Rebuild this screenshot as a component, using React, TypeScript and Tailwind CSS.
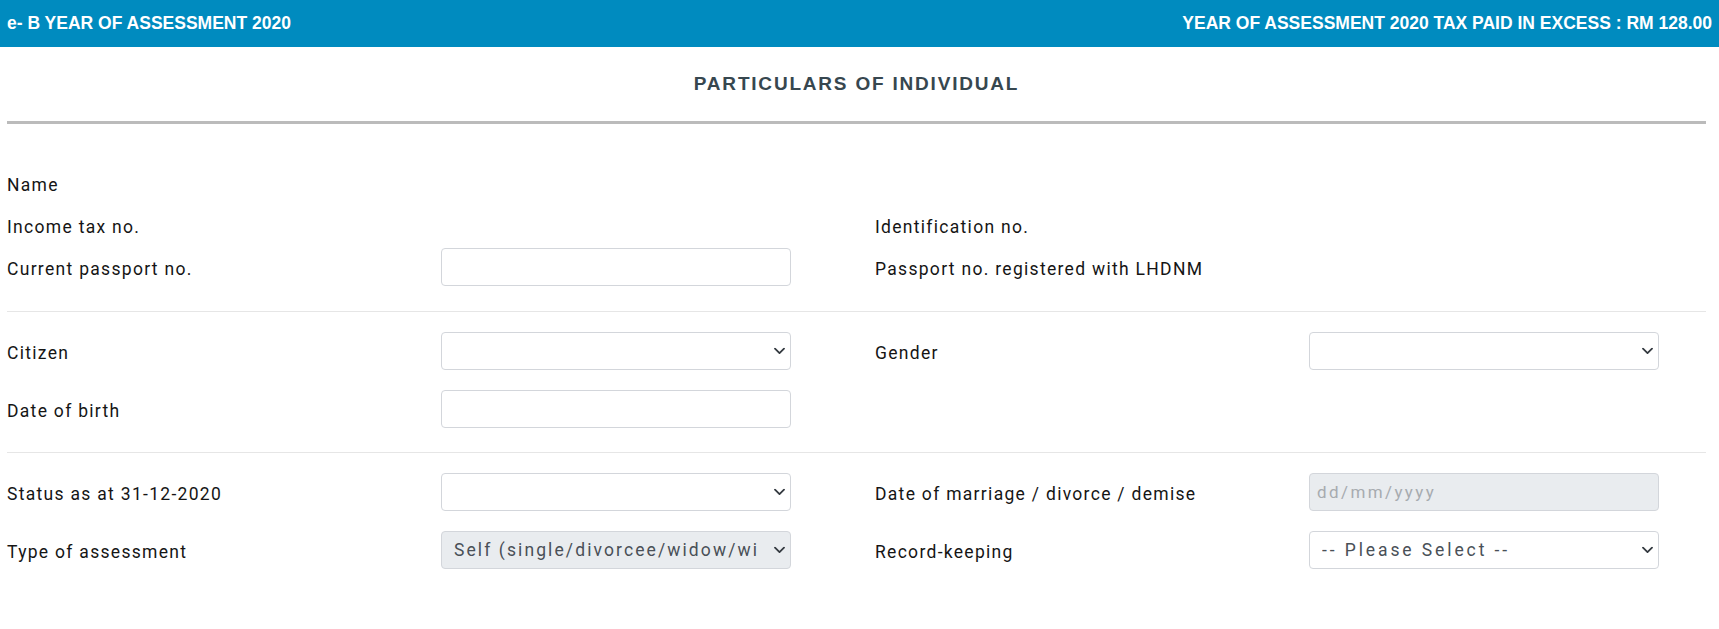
import React from "react";

const labelCls =
  "pt-[5px] text-[17.5px] tracking-[1.3px] text-[#151515] leading-none";

function Chevron() {
  return (
    <svg
      className="pointer-events-none absolute right-[6px] top-1/2 -translate-y-1/2"
      width="11"
      height="7"
      viewBox="0 0 11 7"
      fill="none"
    >
      <path d="M1 1.2 L5.5 5.6 L10 1.2" stroke="#343a40" strokeWidth="1.8" strokeLinecap="round" strokeLinejoin="round" />
    </svg>
  );
}

function Select({ value, disabled, wide }: { value?: string; disabled?: boolean; wide?: boolean }) {
  return (
    <div className="relative w-[350px] h-[38px]">
      <select
        disabled={disabled}
        defaultValue={value ?? ""}
        className={
          "appearance-none w-full h-full rounded-[4px] border border-[#d3d6db] pl-[12px] pr-[31px] text-[17.5px] text-[#495057] outline-none " +
          (wide ? "tracking-[2.9px] " : "tracking-[2.1px] ") +
          (disabled ? "bg-[#e9ecef]" : "bg-white")
        }
        style={{ fontFamily: "Roboto, 'Liberation Sans', sans-serif" }}
      >
        <option value={value ?? ""}>{value ?? ""}</option>
      </select>
      <Chevron />
    </div>
  );
}

function Input({ placeholder, disabled }: { placeholder?: string; disabled?: boolean }) {
  return (
    <input
      disabled={disabled}
      placeholder={placeholder}
      className={
        "w-[350px] h-[38px] rounded-[4px] border border-[#d3d6db] px-[7px] text-[17px] tracking-[2.4px] text-[#495057] placeholder:text-[#a7abaf] outline-none " +
        (disabled ? "bg-[#e9ecef]" : "bg-white")
      }
      style={{ fontFamily: "Roboto, 'Liberation Sans', sans-serif" }}
    />
  );
}

function Row({ children, className = "" }: { children: React.ReactNode; className?: string }) {
  return (
    <div className={"grid grid-cols-[434px_434px_434px_1fr] h-[38px] items-center " + className}>
      {children}
    </div>
  );
}

export default function App() {
  return (
    <div className="min-h-screen bg-white" style={{ fontFamily: "Roboto, 'Liberation Sans', sans-serif" }}>
      <header
        className="h-[47px] bg-[#008bbf] flex items-center justify-between pl-[7px] pr-[7px] text-white font-bold text-[17.5px]"
        style={{ fontFamily: "'Liberation Sans', Arial, sans-serif" }}
      >
        <span>e- B YEAR OF ASSESSMENT 2020</span>
        <span>YEAR OF ASSESSMENT 2020 TAX PAID IN EXCESS : RM 128.00</span>
      </header>

      <div className="pl-[7px] pr-[13px]">
        <div
          className="h-[74px] flex items-center justify-center text-[19px] font-bold tracking-[1.8px] text-[#37474f]"
          style={{ fontFamily: "'Liberation Sans', Arial, sans-serif" }}
        >
          PARTICULARS OF INDIVIDUAL
        </div>
        <div className="h-[3px] bg-[#bbbbbb]" />

        <Row className="mt-[40px]">
          <span className={labelCls}>Name</span>
        </Row>
        <Row className="mt-[4px]">
          <span className={labelCls}>Income tax no.</span>
          <span />
          <span className={labelCls}>Identification no.</span>
        </Row>
        <Row className="mt-[4px]">
          <span className={labelCls}>Current passport no.</span>
          <Input />
          <span className={labelCls}>Passport no. registered with LHDNM</span>
        </Row>

        <div className="h-px bg-[#e6e6e6] mt-[25px]" />

        <Row className="mt-[20px]">
          <span className={labelCls}>Citizen</span>
          <Select />
          <span className={labelCls}>Gender</span>
          <Select />
        </Row>
        <Row className="mt-[20px]">
          <span className={labelCls}>Date of birth</span>
          <Input />
        </Row>

        <div className="h-px bg-[#e6e6e6] mt-[24px]" />

        <Row className="mt-[20px]">
          <span className={labelCls}>Status as at 31-12-2020</span>
          <Select />
          <span className={labelCls}>Date of marriage / divorce / demise</span>
          <Input placeholder="dd/mm/yyyy" disabled />
        </Row>
        <Row className="mt-[20px]">
          <span className={labelCls}>Type of assessment</span>
          <Select value="Self (single/divorcee/widow/widower)" disabled />
          <span className={labelCls}>Record-keeping</span>
          <Select value="-- Please Select --" wide />
        </Row>
      </div>
    </div>
  );
}
